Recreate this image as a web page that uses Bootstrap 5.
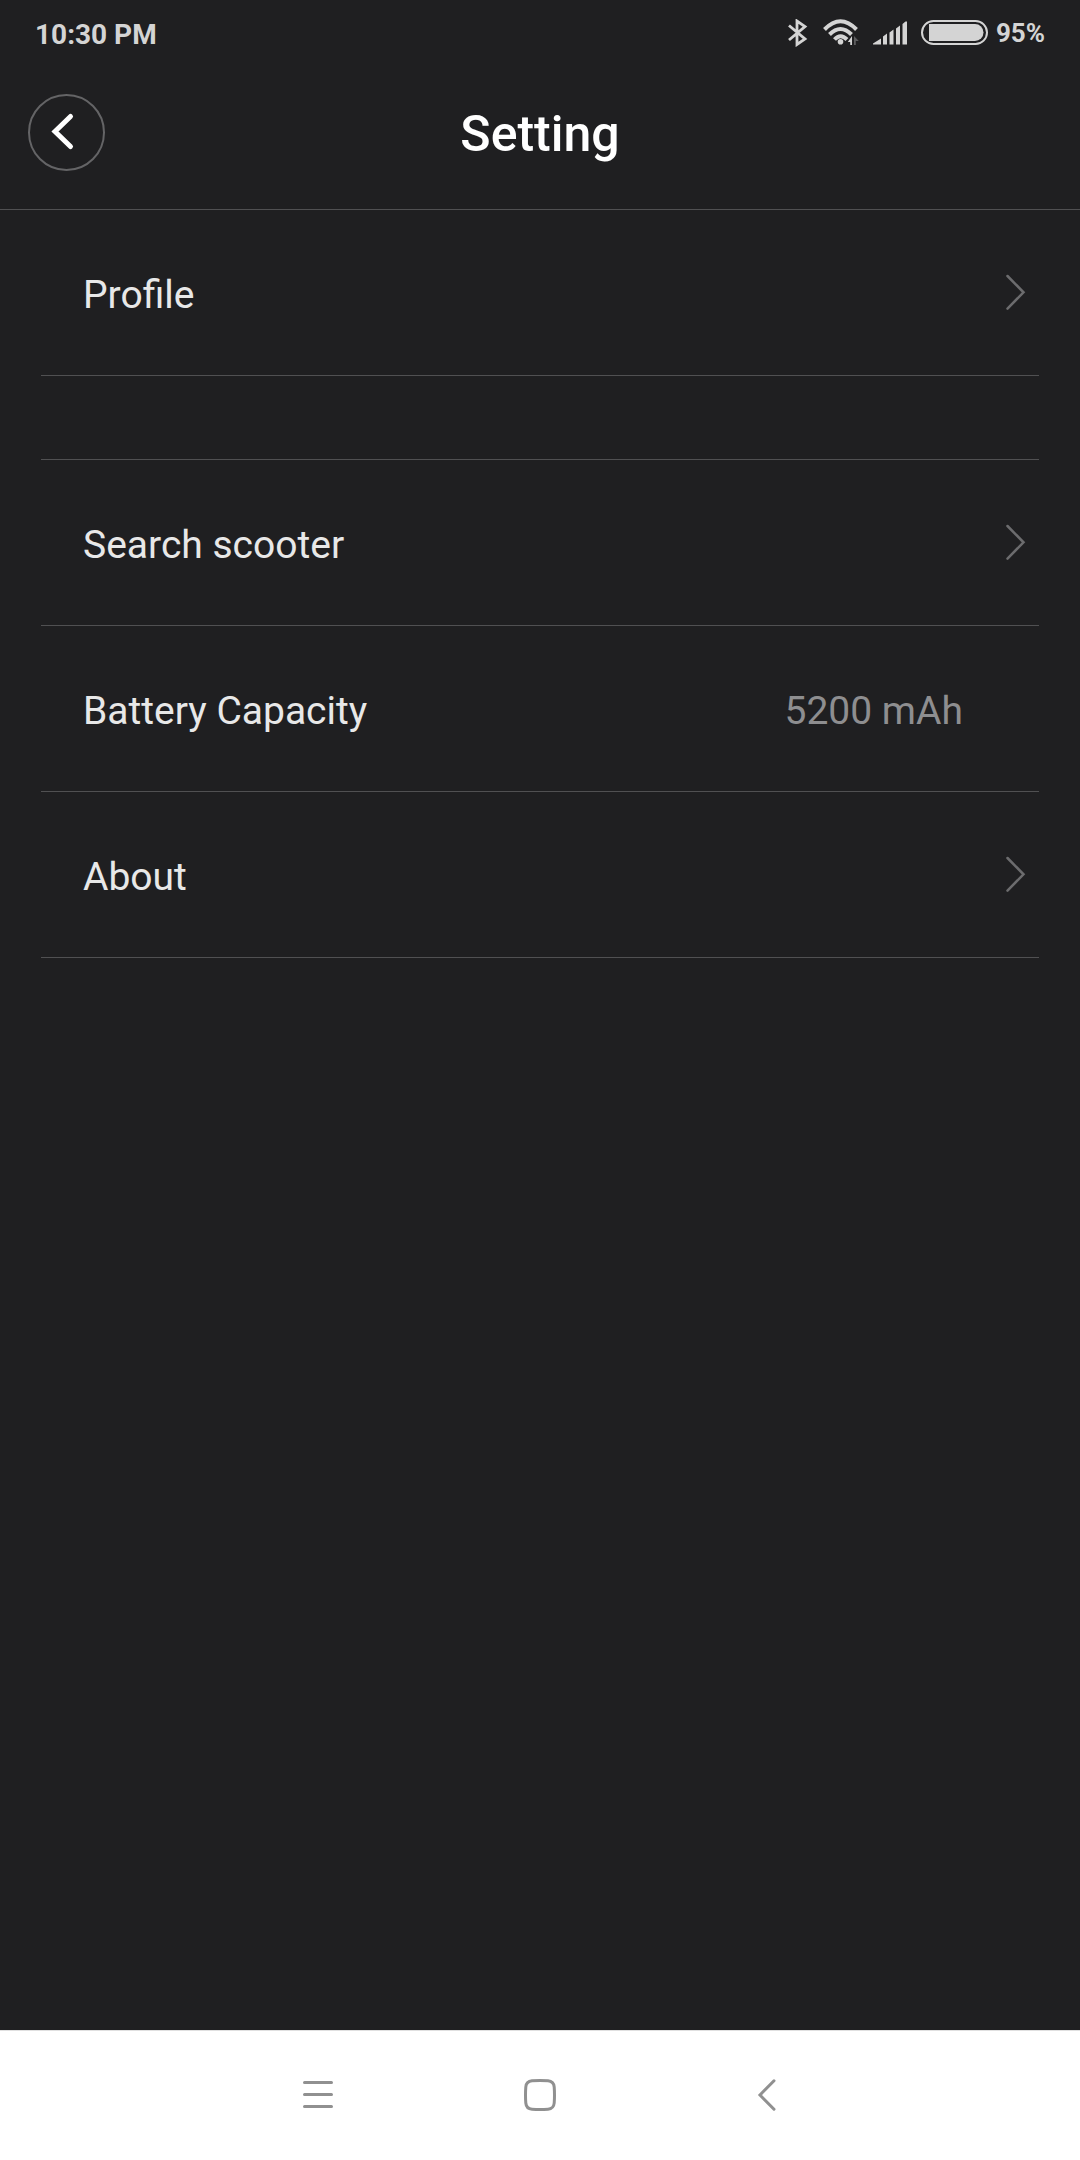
<!DOCTYPE html>
<html lang="en" data-bs-theme="dark">
<head>
<meta charset="utf-8">
<meta name="viewport" content="width=device-width, initial-scale=1">
<title>Setting</title>
<link href="https://cdn.jsdelivr.net/npm/bootstrap@5.3.0/dist/css/bootstrap.min.css" rel="stylesheet">
<style>
  body { background: #1f1f21; font-family: Roboto, "Noto Sans", sans-serif; color: #e8e8e8; }
  svg { display: block; flex: none; }
  .status-bar { height: 66px; padding: 0 35px; color: #d4d4d4; font-weight: 700; line-height: 32px; }
  .status-time { font-size: 28px; padding-top: 3px; }
  .status-level { font-size: 26px; margin-left: -6px; }
  .status-icons { gap: 14px; }
  .app-header { display: grid; grid-template-columns: 1fr auto 1fr; padding: 28px 28px 38px; border-bottom: 1px solid #505052; }
  .back-btn { width: 77px; height: 77px; border: 2px solid #646466; color: #fff; }
  .app-title { font-size: 50px; line-height: 60px; font-weight: 500; color: #fff; padding-top: 3px; }
  .settings { padding: 0 41px; }
  .settings .setting-row { height: 166px; padding: 0 13px 0 42px; font-size: 39px; line-height: 48px; color: #e8e8e8; background: transparent; border: 0; border-bottom: 1px solid #505052; }
  .setting-row span { padding-top: 4px; }
  .setting-row svg { color: #6c6c6e; }
  .setting-row .setting-value { color: #8e8e90; margin-right: 63px; }
  .second-group { margin-top: 83px; border-top: 1px solid #505052; }
  .nav-keys { height: 130px; background: #fff; box-shadow: inset 0 1px #e0e0e0; }
  .nav-key { width: 222px; color: #909090; border: 0; border-radius: 0; }
</style>
<script src="https://cdn.jsdelivr.net/npm/bootstrap@5.3.0/dist/js/bootstrap.bundle.min.js"></script>
</head>
<body class="d-flex flex-column min-vh-100">
  <div class="status-bar d-flex align-items-center justify-content-between">
    <span class="status-time">10:30 PM</span>
    <div class="status-icons d-flex align-items-center">
      <svg width="21" height="28" viewBox="0 0 21 28" fill="none" stroke="currentColor" stroke-width="2.800" role="img" aria-label="Bluetooth"><path d="M1 6.500 17 20 9 25.500V2L17 7.500 1 21"/></svg>
      <svg width="36" height="28" viewBox="0 0 36 28" fill="none" stroke="currentColor" stroke-width="4" role="img" aria-label="Wi-Fi">
        <path d="M1.500 10.500Q17.500-6 33.500 10.500"/><path d="M6.500 15.500Q17.500 4.500 28.500 15.500"/><path d="M11.500 20.500Q17.500 14 24 20.500"/>
        <circle cx="17.500" cy="22.700" r="2.800" fill="currentColor" stroke="none"/>
        <path d="M29 17v9h-1.800v-3h-2.400z" fill="currentColor" stroke="none"/><path d="M31 17v9h1.800v-4h3z" fill="#5c5c5e" stroke="none"/>
      </svg>
      <svg width="34" height="28" viewBox="0 0 34 28" fill="currentColor" role="img" aria-label="Signal"><path d="M0 25.500V24.500L8 19.500V25.500ZM10 25.500V17.500L14 14.500V25.500ZM16.500 25.500V13.500L20.500 10.500V25.500ZM23 25.500V9.500L27 6.500V25.500ZM29.500 25.500V5L32.500 2.500H34V25.500Z"/></svg>
      <svg width="67" height="28" viewBox="0 0 67 28" role="img" aria-label="Battery"><rect x="1" y="2" width="65" height="23" rx="11.500" fill="none" stroke="currentColor" stroke-width="2"/><path d="M8 5H54A8.500 8.500 0 0 1 54 22H8Z" fill="currentColor"/></svg>
      <span class="status-level">95%</span>
    </div>
  </div>

  <header class="app-header align-items-center">
    <button type="button" class="back-btn btn rounded-circle p-0 d-flex align-items-center justify-content-center" aria-label="Back">
      <svg width="73" height="73" viewBox="0 0 73 73" fill="none" stroke="currentColor" stroke-width="5" stroke-linecap="round"><path d="M40.500 20.500 25 35.500 40.500 50.500"/></svg>
    </button>
    <h1 class="app-title m-0">Setting</h1>
  </header>

  <main class="settings flex-grow-1">
    <div class="list-group rounded-0">
      <a href="#profile" class="setting-row list-group-item list-group-item-action rounded-0 d-flex align-items-center justify-content-between">
        <span>Profile</span>
        <svg width="20" height="37" viewBox="0 0 20 37" fill="none" stroke="currentColor" stroke-width="2.500" stroke-linecap="round"><path d="M1.500 2 17.500 18.300 1.500 34.600"/></svg>
      </a>
    </div>
    <div class="second-group list-group rounded-0">
      <a href="#search" class="setting-row list-group-item list-group-item-action rounded-0 d-flex align-items-center justify-content-between">
        <span>Search scooter</span>
        <svg width="20" height="37" viewBox="0 0 20 37" fill="none" stroke="currentColor" stroke-width="2.500" stroke-linecap="round"><path d="M1.500 2 17.500 18.300 1.500 34.600"/></svg>
      </a>
      <div class="setting-row list-group-item rounded-0 d-flex align-items-center justify-content-between">
        <span>Battery Capacity</span>
        <span class="setting-value">5200 mAh</span>
      </div>
      <a href="#about" class="setting-row list-group-item list-group-item-action rounded-0 d-flex align-items-center justify-content-between">
        <span>About</span>
        <svg width="20" height="37" viewBox="0 0 20 37" fill="none" stroke="currentColor" stroke-width="2.500" stroke-linecap="round"><path d="M1.500 2 17.500 18.300 1.500 34.600"/></svg>
      </a>
    </div>
  </main>

  <nav class="nav-keys d-flex justify-content-center" aria-label="System navigation">
    <button type="button" class="nav-key btn p-0 d-flex align-items-center justify-content-center" aria-label="Recent apps">
      <svg width="32" height="32" viewBox="0 0 32 32" fill="none" stroke="currentColor" stroke-width="3" stroke-linecap="round"><path d="M2.500 3.500h27M2.500 15.500h27M2.500 27.500h27"/></svg>
    </button>
    <button type="button" class="nav-key btn p-0 d-flex align-items-center justify-content-center" aria-label="Home">
      <svg width="32" height="32" viewBox="0 0 32 32" fill="none" stroke="currentColor" stroke-width="3"><path d="M8 1.800Q16 1.200 24 1.800 29.700 2.300 30.200 8 30.800 16 30.200 24 29.700 29.700 24 30.200 16 30.800 8 30.200 2.300 29.700 1.800 24 1.200 16 1.800 8 2.300 2.300 8 1.800Z"/></svg>
    </button>
    <button type="button" class="nav-key btn p-0 d-flex align-items-center justify-content-center" aria-label="Back">
      <svg width="32" height="32" viewBox="0 0 32 32" fill="none" stroke="currentColor" stroke-width="3" stroke-linecap="round"><path d="M28 1.800 14 16 28 30.200"/></svg>
    </button>
  </nav>
</body>
</html>
